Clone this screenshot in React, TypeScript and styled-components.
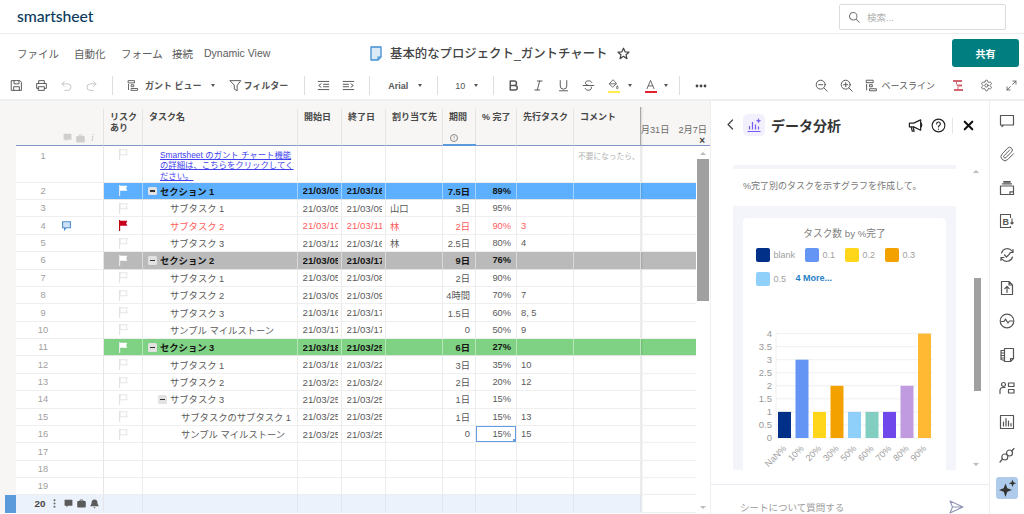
import React from "react";
import styled, { createGlobalStyle } from "styled-components";
import { Paperclip, Settings } from "lucide-react";

const JP = `"Liberation Sans", "Noto Sans CJK JP", sans-serif`;
const COLS = "16px 88px 39px 155px 44px 44px 57px 33px 41px 57px 67px 55px";
const HEAD_COLS = "16px 88px 39px 155px 44px 44px 57px 33px 41px 57px 67px 69px";

const Global = createGlobalStyle`
  html, body { margin: 0; padding: 0; background: #fff; }
  body { font-family: ${JP}; overflow: hidden; }
  * { box-sizing: border-box; }
`;

const Page = styled.div`
  width: 1024px; height: 514px; display: flex; flex-direction: column; overflow: hidden; background: #fff;
`;
const TopBar = styled.header`
  height: 34px; flex: none; display: flex; align-items: center; justify-content: space-between;
  padding: 0 18px 2px 17px; border-bottom: 1px solid #ececec;
`;
const Logo = styled.div`
  font-family: Lato, sans-serif; font-size: 15.8px; font-weight: 500; color: #0d3a5c; letter-spacing: -0.1px; margin-top: -1px;
`;
const SearchBox = styled.div`
  width: 167px; height: 26px; border: 1px solid #dcdcdc; border-radius: 2px; display: flex; align-items: center;
  padding-left: 8px; gap: 7px; font-size: 9.5px; color: #b0b0b0; margin-top: 2px;
`;
const MenuBar = styled.nav`
  height: 38px; flex: none; display: flex; align-items: center; padding: 0 5px 0 17px;
`;
const MenuItem = styled.span<{ $w: number }>`
  width: ${p => p.$w}px; font-size: 10.5px; color: #5c5c5c; white-space: nowrap; flex: none;
`;
const TitleBlock = styled.div`
  display: flex; align-items: center; margin-left: 101px; flex: none;
`;
const TitleText = styled.h1`
  margin: 0 0 0 8px; font-size: 12.4px; font-weight: 500; color: #444; white-space: nowrap;
`;
const ShareBtn = styled.button`
  margin-left: auto; width: 67px; height: 28px; background: #007e80; border: 0; border-radius: 3px; color: #fff;
  font: bold 10px ${JP};
`;
const Toolbar = styled.div`
  height: 29px; flex: none; display: flex; align-items: center; padding-left: 4px; border-bottom: 2px solid #efefef; color: #585858;
`;
const Tool = styled.span<{ $ml?: number; $w?: number }>`
  width: ${p => p.$w ?? 25}px; margin-left: ${p => p.$ml ?? 0}px; flex: none; display: flex; align-items: center; justify-content: center;
`;
const ToolSep = styled.span<{ $ml?: number }>`
  width: 1px; height: 19px; background: #dedede; margin-left: ${p => p.$ml ?? 8}px; flex: none;
`;
const ToolLabel = styled.span<{ $ml?: number; $bold?: boolean }>`
  margin-left: ${p => p.$ml ?? 0}px; font-size: 9px; font-weight: ${p => (p.$bold === false ? 400 : 700)}; color: #555; white-space: nowrap; flex: none;
`;
const Caret = styled.span<{ $ml?: number }>`
  margin-left: ${p => p.$ml ?? 0}px; flex: none; width: 0; height: 0; border-left: 2.5px solid transparent; border-right: 2.5px solid transparent;
  border-top: 3px solid #555;
`;
const ToolRight = styled.div`
  margin-left: auto; display: flex; align-items: center;
`;
const Main = styled.main`
  flex: 1; display: flex; min-height: 0;
`;
const Sheet = styled.section`
  width: 711px; flex: none; display: flex; flex-direction: column; border-right: 1px solid #eee;
`;
const HeadRow = styled.div`
  height: 45px; flex: none; display: grid; grid-template-columns: ${HEAD_COLS}; background: #f7f6f4; padding-top: 8px;
`;
const HeadCell = styled.div<{ $line?: boolean }>`
  padding: 3px 2px 0 6px; font-size: 9px; line-height: 10.5px; font-weight: 700; color: #484848; white-space: nowrap;
  border-bottom: 1.5px solid #7f98c8; border-right: 1px solid ${p => (p.$line === false ? "transparent" : "#e4e4e2")};
  display: flex; flex-direction: column; justify-content: space-between; position: relative; min-width: 0;
`;
const HeadGutter = styled.div``;
const HeadIcons = styled.div`
  height: 100%; display: flex; justify-content: flex-end; align-self: flex-end; align-items: flex-end; padding: 0 6px 2px 0; gap: 4px; margin-right: -2px;
`;
const HeadItalic = styled.span`
  font: italic 400 10px "Liberation Serif", serif; color: #c8c8c8; width: 6px; margin-left: 2px; line-height: 10px;
`;
const InfoMark = styled.span`
  width: 8px; height: 8px; border: 1px solid #888; border-radius: 50%; font-size: 6px; line-height: 6px; text-align: center; font-weight: 400; color: #666;
  margin: 0 0 3px 1px;
`;
const ActiveBar = styled.span`
  position: absolute; left: 0; right: -1px; bottom: -1.5px; height: 2.5px; background: #5b9bdc;
`;
const GanttHead = styled.div`
  border-left: 1.5px solid #a8a8a8; margin-top: -2px; margin-left: -1px; padding-top: 15px; overflow: hidden; display: flex; flex-direction: column; align-items: flex-end;
  border-bottom: 1.5px solid #7f98c8; box-shadow: inset 2px 0 2px -1px rgba(0,0,0,.12);
`;
const GanttDates = styled.div`
  display: flex; gap: 9px; justify-content: flex-end; font-size: 9.2px; color: #6a6a6a; white-space: nowrap; padding-right: 3px; width: 100%;
`;
const GanttClose = styled.span`
  font-size: 10px; font-weight: 700; color: #444; line-height: 9px; margin: 0 5px 0 0;
`;
const SheetBody = styled.div`
  flex: 1; display: flex; min-height: 0; overflow: hidden;
`;
const Rows = styled.div`
  width: 696px; flex: none; display: flex; flex-direction: column;
`;
type Kind = "plain" | "blue" | "gray" | "green" | "red" | "active";
const bgOf: Record<Kind, string> = { plain: "#fff", blue: "#5cb0ff", gray: "#bababa", green: "#7fd183", red: "#fff", active: "#ebf2fb" };
const Row = styled.div<{ $h?: number }>`
  height: ${p => p.$h ?? 17.38}px; flex: none; display: grid; grid-template-columns: ${COLS};
`;
const Gutter = styled.div<{ $active?: boolean }>`
  background: #f7f6f4; box-shadow: ${p => (p.$active ? "inset -11px 0 0 #5b9bdc" : "none")};
`;
const NumCell = styled.div<{ $active?: boolean; $top?: boolean }>`
  display: flex; align-items: ${p => (p.$top ? "flex-start" : "center")}; padding-top: ${p => (p.$top ? 5 : 0)}px;
  border-bottom: 1px solid #efefef; border-right: 1px solid #e6e6e6; background: ${p => (p.$active ? "#ebf2fb" : "#fff")};
  border-bottom-color: ${p => (p.$active ? "#ebf2fb" : "#efefef")};
`;
const RowNo = styled.span<{ $active?: boolean }>`
  width: 40px; margin-left: 7px; text-align: center; flex: none; font-size: ${p => (p.$active ? 9.8 : 9.3)}px;
  font-weight: ${p => (p.$active ? 700 : 400)}; color: ${p => (p.$active ? "#444" : "#a0a0a0")};
  transform: translateX(${p => (p.$active ? -3 : 0)}px);
`;
const RowTools = styled.span`
  display: flex; align-items: center; gap: 4px; margin-left: -1px;
`;
const Cell = styled.div<{ $kind: Kind; $right?: boolean; $bold?: boolean; $top?: boolean }>`
  position: relative; display: flex; align-items: ${p => (p.$top ? "flex-start" : "center")};
  justify-content: ${p => (p.$right ? "flex-end" : "flex-start")};
  padding: ${p => (p.$top ? "3px" : "0")} ${p => (p.$right ? 5 : 0)}px 0 4px; overflow: hidden; white-space: nowrap; min-width: 0; font-size: 9.3px;
  background: ${p => bgOf[p.$kind]};
  color: ${p => (p.$kind === "red" ? "#ff5c5c" : p.$bold ? "#151515" : "#5a5a5a")};
  font-weight: ${p => (p.$bold ? 700 : 400)};
  border-bottom: 1px solid ${p => (p.$kind === "plain" || p.$kind === "red" ? "#efefef" : p.$kind === "active" ? "#ebf2fb" : "#e4e4e4")};
  border-right: 1px solid ${p => (p.$kind === "plain" || p.$kind === "red" ? "#ececec" : p.$kind === "active" ? "#dfe6ef" : "rgba(255,255,255,.45)")};
`;
const RiskCell = styled(Cell)`
  padding-left: 15px;
`;
const TaskCell = styled(Cell)<{ $indent?: number }>`
  padding-left: ${p => p.$indent ?? 5}px;
`;
const DateText = styled.span`
  display: block; width: 35.5px; overflow: hidden; flex: none; margin-left: .5px; font-size: 9.7px;
`;
const Toggle = styled.span`
  width: 8.5px; height: 8.5px; border-radius: 1.5px; background: #e2e2e2; margin-right: 3.5px; flex: none; display: flex; align-items: center; justify-content: center;
  &::after { content: ""; width: 5px; height: 1.5px; background: #333; }
`;
const LinkText = styled.a`
  color: #3f3ff0; font-size: 8.4px; line-height: 10.4px; text-decoration: underline; white-space: normal; margin-top: 1px;
`;
const NoteText = styled.span`
  color: #b0b0b0; font-size: 7.7px; margin-top: 1px;
`;
const Selected = styled.span`
  position: absolute; inset: 0; border: 1px solid #649fe4; pointer-events: none;
  &::after { content: ""; position: absolute; right: -1px; bottom: -1px; width: 3px; height: 3px; background: #649fe4; }
`;
const GanttCell = styled.div<{ $kind: Kind }>`
  background: ${p => (p.$kind === "active" || p.$kind === "plain" || p.$kind === "red" ? "#fff" : bgOf[p.$kind])};
  border-left: 1.5px solid #a8a8a8; margin-left: -1px; box-shadow: inset 2px 0 2px -1px rgba(0,0,0,.12);
  border-bottom: 1px solid ${p => (p.$kind === "plain" || p.$kind === "red" || p.$kind === "active" ? "#efefef" : "#e4e4e4")};
`;
const ScrollCol = styled.div`
  width: 14px; flex: none; display: flex; flex-direction: column; align-items: center; padding-top: 6px; background: #fff;
`;
const ArrowUp = styled.span`
  width: 0; height: 0; border-left: 3px solid transparent; border-right: 3px solid transparent; border-bottom: 3px solid #bbb; flex: none;
`;
const ArrowDown = styled.span`
  width: 0; height: 0; border-left: 3px solid transparent; border-right: 3px solid transparent; border-top: 3px solid #bbb; margin-top: auto; margin-bottom: 5px; flex: none;
`;
const Thumb = styled.span`
  width: 12px; height: 142px; background: #a0a0a0; margin-top: 4px; flex: none;
`;
const Panel = styled.aside`
  width: 278px; flex: none; display: flex; flex-direction: column;
`;
const PanelHead = styled.div`
  height: 64px; flex: none; display: flex; align-items: center; padding: 0 15px 17px 13px;
`;
const PanelIconBox = styled.span`
  width: 22px; height: 22px; background: #f3f0fe; border-radius: 5px; margin-left: 6px; display: flex; align-items: center; justify-content: center;
`;
const PanelTitle = styled.h2`
  margin: 0 0 0 6px; font: 700 14px ${JP}; color: #343434; white-space: nowrap;
`;
const PanelActions = styled.div`
  margin-left: auto; display: flex; align-items: center; gap: 8px; margin-top: 2px;
`;
const VSep = styled.span`
  width: 1px; height: 16px; background: #e6e6e6; margin: 0 2px 0 -2px;
`;
const PanelBody = styled.div`
  position: relative; overflow: hidden; padding: 0 33px 0 22px; height: 305px; flex: none;
`;
const Strip = styled.div`
  height: 4px; background: #f3f5fa;
`;
const Prompt = styled.p`
  margin: 12px 0 0 10px; height: 25px; font-size: 9px; line-height: 10px; color: #777; white-space: nowrap;
`;
const ChartBlock = styled.div`
  background: #f3f5fb; padding: 12px 10px 0; height: 264px; overflow: hidden;
`;
const ChartCard = styled.div`
  background: #fff; border-radius: 4px; height: 300px; padding: 10px 0 0 13px;
`;
const ChartTitle = styled.div`
  text-align: center; font-size: 9.7px; color: #808080; padding-right: 13px; line-height: 12px;
`;
const Legend = styled.div`
  display: flex; flex-wrap: wrap; gap: 10px; margin-top: 8px; width: 185px;
`;
const LegendItem = styled.div`
  display: flex; align-items: center; gap: 3.5px; font-size: 9px; color: #a0a0a0; height: 14px;
`;
const Swatch = styled.span<{ $c: string }>`
  width: 14px; height: 14px; border-radius: 2px; background: ${p => p.$c}; flex: none;
`;
const More = styled.span`
  color: #1f7ec9; font-weight: 700; font-size: 9px; margin-left: 6px; height: 14px; line-height: 13px;
`;
const PlotWrap = styled.div`
  margin: 34px 0 0 -13px; height: 150px;
`;
const PanelArrow = styled.span<{ $down?: boolean }>`
  position: absolute; right: 10px; ${p => (p.$down ? "bottom: 4px; border-top: 3px solid #bbb;" : "top: 5px; border-bottom: 3px solid #bbb;")}
  width: 0; height: 0; border-left: 3px solid transparent; border-right: 3px solid transparent;
`;
const PanelThumb = styled.span`
  position: absolute; top: 113px; right: 8px; width: 7px; height: 113px; background: #a0a0a0;
`;
const PanelFoot = styled.div`
  height: 30px; flex: none; border-top: 1px solid #e9ecf3; display: flex; align-items: center; justify-content: space-between; padding: 14px 25px 0 29px;
  font-size: 9.5px; color: #9a9a9a; margin-top: auto;
`;
const Rail = styled.nav`
  width: 35px; flex: none; border-left: 1px solid #eee; display: flex; flex-direction: column; align-items: center; padding-top: 9px; gap: 11.4px; color: #555;
`;
const RailItem = styled.span<{ $active?: boolean }>`
  width: 22px; height: 22px; display: flex; align-items: center; justify-content: center; border-radius: 3px;
  background: ${p => (p.$active ? "#aecbeb" : "transparent")};
`;
const ColorBar = styled.span<{ $c: string }>`
  display: block; width: 12px; height: 2px; background: ${p => p.$c}; margin-top: 1px;
`;
const Stack = styled.span`
  display: flex; flex-direction: column; align-items: center;
`;

type SvgP = { size?: number; children: React.ReactNode; sw?: number; color?: string; vb?: number };
const Ico = ({ size = 13, children, sw = 1.2, color = "currentColor", vb = 16 }: SvgP) => (
  <svg width={size} height={size} viewBox={`0 0 ${vb} ${vb}`} fill="none" stroke={color} strokeWidth={sw} strokeLinecap="round" strokeLinejoin="round">
    {children}
  </svg>
);

const Flag = ({ kind }: { kind: "line" | "white" | "red" }) => (
  <svg width="9" height="11" viewBox="0 0 9 11" style={{ display: "block" }}>
    <path d="M.6 0v11" stroke={kind === "red" ? "#b00" : kind === "white" ? "#eee" : "#e2e2e2"} strokeWidth="1.1" fill="none" />
    <path d="M1 .8h7.3L7.2 3.2 8.3 5.8H1z" fill={kind === "red" ? "#c8001e" : kind === "white" ? "#fff" : "none"} stroke={kind === "line" ? "#e2e2e2" : "none"} strokeWidth=".9" />
  </svg>
);
const Bubble = ({ color = "#5a5a5a", outline }: { color?: string; outline?: boolean }) => (
  <svg width="9" height="10" viewBox="0 0 9 10" style={{ display: "block" }}>
    <path d="M.6.8h7.8v6H4L2.6 8.6V6.800H.6z" fill={outline ? "#cfe2f7" : color} stroke={outline ? color : "none"} strokeWidth="1.1" />
  </svg>
);
const Case = ({ color = "#5a5a5a" }: { color?: string }) => (
  <svg width="9" height="9" viewBox="0 0 9 9" style={{ display: "block" }}>
    <path d="M3 2V1h3v1" stroke={color} fill="none" strokeWidth=".9" />
    <rect x=".2" y="2" width="8.600" height="6.500" rx="1" fill={color} />
  </svg>
);
const Bell = () => (
  <svg width="9" height="10" viewBox="0 0 9 10" style={{ display: "block" }}>
    <path d="M4.500 .6c-2 0-3 1.400-3 3.400 0 1.500-1 2.400-1.300 3.200h8.600C8.500 6.400 7.500 5.500 7.500 4c0-2-1-3.400-3-3.400zM3.300 8.200h2.400L4.500 9.500z" fill="#5a5a5a" />
  </svg>
);

type Rec = { n: number; kind: Kind; task?: string; level?: number; toggle?: boolean; s?: string; e?: string; who?: string; d?: string; p?: string; pre?: string; flag?: boolean; bubble?: boolean; sel?: boolean };
const rows: Rec[] = [
  { n: 2, kind: "blue", task: "セクション 1", level: 0, toggle: true, s: "21/03/05", e: "21/03/16", d: "7.5日", p: "89%", flag: true },
  { n: 3, kind: "plain", task: "サブタスク 1", level: 1, s: "21/03/05", e: "21/03/09", who: "山口", d: "3日", p: "95%", flag: true },
  { n: 4, kind: "red", task: "サブタスク 2", level: 1, s: "21/03/10", e: "21/03/11", who: "林", d: "2日", p: "90%", pre: "3", flag: true, bubble: true },
  { n: 5, kind: "plain", task: "サブタスク 3", level: 1, s: "21/03/12", e: "21/03/16", who: "林", d: "2.5日", p: "80%", pre: "4", flag: true },
  { n: 6, kind: "gray", task: "セクション 2", level: 0, toggle: true, s: "21/03/05", e: "21/03/17", d: "9日", p: "76%", flag: true },
  { n: 7, kind: "plain", task: "サブタスク 1", level: 1, s: "21/03/05", e: "21/03/08", d: "2日", p: "90%", flag: true },
  { n: 8, kind: "plain", task: "サブタスク 2", level: 1, s: "21/03/09", e: "21/03/09", d: "4時間", p: "70%", pre: "7", flag: true },
  { n: 9, kind: "plain", task: "サブタスク 3", level: 1, s: "21/03/16", e: "21/03/17", d: "1.5日", p: "60%", pre: "8, 5", flag: true },
  { n: 10, kind: "plain", task: "サンプル マイルストーン", level: 1, s: "21/03/17", e: "21/03/17", d: "0", p: "50%", pre: "9", flag: true },
  { n: 11, kind: "green", task: "セクション 3", level: 0, toggle: true, s: "21/03/18", e: "21/03/25", d: "6日", p: "27%", flag: true },
  { n: 12, kind: "plain", task: "サブタスク 1", level: 1, s: "21/03/18", e: "21/03/22", d: "3日", p: "35%", pre: "10", flag: true },
  { n: 13, kind: "plain", task: "サブタスク 2", level: 1, s: "21/03/23", e: "21/03/24", d: "2日", p: "20%", pre: "12", flag: true },
  { n: 14, kind: "plain", task: "サブタスク 3", level: 1, toggle: true, s: "21/03/25", e: "21/03/25", d: "1日", p: "15%", flag: true },
  { n: 15, kind: "plain", task: "サブタスクのサブタスク 1", level: 2, s: "21/03/25", e: "21/03/25", d: "1日", p: "15%", pre: "13", flag: true },
  { n: 16, kind: "plain", task: "サンプル マイルストーン", level: 2, s: "21/03/25", e: "21/03/25", d: "0", p: "15%", pre: "15", flag: true, sel: true },
  { n: 17, kind: "plain" },
  { n: 18, kind: "plain" },
  { n: 19, kind: "plain" },
];

const bars = [
  { l: "NaN%", v: 1, c: "#003087" }, { l: "10%", v: 3, c: "#6495f5" }, { l: "20%", v: 1, c: "#ffd61a" },
  { l: "30%", v: 2, c: "#f2a100" }, { l: "50%", v: 1, c: "#8fd0fb" }, { l: "60%", v: 1, c: "#82cec1" },
  { l: "70%", v: 1, c: "#7047eb" }, { l: "80%", v: 2, c: "#c09bdf" }, { l: "90%", v: 4, c: "#ffb933" },
];

const Plot = () => {
  const y0 = 118, unit = 26.1, ox = 33;
  return (
    <svg width="203" height="150" viewBox="0 0 203 150" style={{ display: "block" }}>
      {[0, 0.5, 1, 1.5, 2, 2.5, 3, 3.5, 4].map(t => (
        <g key={t}>
          <line x1={ox} x2={190} y1={y0 - t * unit} y2={y0 - t * unit} stroke="#f0f0f0" strokeWidth="1" />
          <text x={29} y={y0 - t * unit + 3.200} textAnchor="end" fontSize="9.500" fill="#999" fontFamily="Liberation Sans">{t}</text>
        </g>
      ))}
      <line x1={ox} x2={ox} y1={y0 - 4 * unit} y2={y0} stroke="#f0f0f0" />
      {bars.map((b, i) => (
        <g key={b.l}>
          <rect x={35 + i * 17.5} y={y0 - b.v * unit} width="13" height={b.v * unit} fill={b.c} />
          <text transform={`translate(${44 + i * 17.5} ${y0 + 11}) rotate(-45)`} textAnchor="end" fontSize="9" fill="#a0a0a0" fontFamily="Liberation Sans">{b.l}</text>
        </g>
      ))}
    </svg>
  );
};

const railIcons: React.ReactNode[] = [
  <Ico size={16}><path d="M1.500 2.500h13v9.500H4.300L3 13.500V12H1.500z" /></Ico>,
  <Paperclip size={16} strokeWidth={1.4} />,
  <Ico size={16}><path d="M1.500 6h13v8.500h-13zM3.500 3.800h9M11 14.500v-2.700h3.500" /><path d="M5 1.800h6" strokeWidth={1.800} /></Ico>,
  <svg width="16" height="16" viewBox="0 0 16 16" fill="none" stroke="currentColor" strokeWidth="1.100" strokeLinejoin="round">
    <path d="M11.500 5V1.500h-10v13h10V13" />
    <text x="3.600" y="11.500" fontSize="9" fontWeight="700" fill="currentColor" stroke="none" fontFamily="Liberation Sans">B</text>
    <path d="M13 5.500V11M11.500 9.500 13 11l1.500-1.500" />
  </svg>,
  <Ico size={16}><path d="M2.500 6A6 6 0 0 1 13 4l1 1.500M13.500 10A6 6 0 0 1 3 12l-1-1.500M14 2.500v3h-3M2 13.500v-3h3M5.500 8l2 2 3.500-3.500" /></Ico>,
  <Ico size={16}><path d="M2.500 1.500h7.500l3.500 3.500v9.500h-11zM10 1.500V5h3.500M8 12.500v-6M5.800 8.700 8 6.500l2.200 2.200" /></Ico>,
  <Ico size={16}><circle cx="8" cy="8" r="6.800" /><path d="M2.500 8.500h2.500l1.500-2.500 2.500 4 1.500-2h3" /></Ico>,
  <Ico size={16}><path d="M5.500 1.500h9v10l-3 3h-6zM14.500 11.500h-3v3M5.500 3.500h-3.500v9l3.500 1M2 6h3.500M2 8.500h3.500M2 11h3.500" /></Ico>,
  <Ico size={16}><circle cx="4.500" cy="4.500" r="2" /><path d="M1 13.500V10a3 3 0 0 1 3-2.500h2M9.500 3h5.500v3.500H9.500zM9.500 9.500h5.500V13H9.500z" /></Ico>,
  <Ico size={16}><path d="M1.500 1.500h13v13h-13zM4.500 12V8M7 12V4.500M9.500 12V7M12 12V9.500" /></Ico>,
  <Ico size={16}><circle cx="5.800" cy="10" r="3" /><circle cx="10.500" cy="6" r="3" /><path d="M1 15l2.500-3M12.800 4l2.200-2.500" /></Ico>,
  <svg width="19" height="19" viewBox="0 0 19 19"><path d="M7.500 4.500 9.300 9.200 14 11 9.300 12.800 7.500 18 5.700 12.800 1 11 5.700 9.200zM14.500.5l1 2.700 2.700 1-2.700 1-1 2.700-1-2.700-2.700-1 2.700-1z" fill="#333" /></svg>,
];

const GanttIcon = () => (
  <Ico><path d="M2 1.500h8v3H2zM2 6.500v7M6 7h3v2.500H6zM6 12h8v2.500H6z" /></Ico>
);

export default function App() {
  return (
    <Page>
      <Global />
      <TopBar>
        <Logo>smartsheet</Logo>
        <SearchBox>
          <Ico size={12} color="#777" sw={1.400}><circle cx="7" cy="7" r="5" /><path d="m11 11 4 4" /></Ico>
          検索...
        </SearchBox>
      </TopBar>
      <MenuBar>
        <MenuItem $w={57}>ファイル</MenuItem>
        <MenuItem $w={47}>自動化</MenuItem>
        <MenuItem $w={51}>フォーム</MenuItem>
        <MenuItem $w={32}>接続</MenuItem>
        <MenuItem $w={65}>Dynamic View</MenuItem>
        <TitleBlock>
          <svg width="12" height="15" viewBox="0 0 12 15"><path d="M1 1h10v10l-3 3H1z" fill="#dbeaf8" stroke="#3f8fd2" strokeWidth="1.300" strokeLinejoin="round" /><path d="M8 14v-3h3" fill="none" stroke="#3f8fd2" strokeWidth="1.100" /></svg>
          <TitleText>基本的なプロジェクト_ガントチャート</TitleText>
          <Tool $w={14} $ml={9}>
            <svg width="13" height="13" viewBox="0 0 16 16" fill="none" stroke="#444" strokeWidth="1.500" strokeLinejoin="round"><path d="m8 1.500 2 4.400 4.700.5-3.500 3.200 1 4.700L8 11.500l-4.200 2.800 1-4.700L1.300 6.400 6 5.900z" /></svg>
          </Tool>
        </TitleBlock>
        <ShareBtn>共有</ShareBtn>
      </MenuBar>
      <Toolbar>
        <Tool><Ico><path d="M2 2h10l2 2v10H2zM5 2v4h6V2M4.500 14V9.500h7V14" /></Ico></Tool>
        <Tool><Ico><path d="M4.500 5V2h7v3M4.500 11.500H2V5.500h12v6h-2.500M4.500 9.500h7V14h-7z" /></Ico></Tool>
        <Tool><Ico color="#c4c4c4"><path d="M2.500 6h7a4 4 0 0 1 0 8H6M5.500 3l-3 3 3 3" /></Ico></Tool>
        <Tool><Ico color="#c4c4c4"><path d="M13.500 6h-7a4 4 0 0 0 0 8H10M10.500 3l3 3-3 3" /></Ico></Tool>
        <ToolSep />
        <Tool $w={12} $ml={14}><GanttIcon /></Tool>
        <ToolLabel $ml={6}>ガント ビュー</ToolLabel>
        <Caret $ml={9} />
        <Tool $w={13} $ml={14}><Ico><path d="M1.500 2h13L10 8v6.500L6.500 12.500V8z" /></Ico></Tool>
        <ToolLabel $ml={2}>フィルター</ToolLabel>
        <ToolSep $ml={16} />
        <Tool $ml={6}><Ico><path d="M1.500 3h13M8 6.500h6.500M8 9.500h6.500M1.500 13h13M5 6 2 8l3 2" /></Ico></Tool>
        <Tool><Ico><path d="M1.500 3h13M1.500 6.500H8M1.500 9.500H8M1.500 13h13M11 6l3 2-3 2" /></Ico></Tool>
        <ToolSep />
        <ToolLabel $ml={18}>Arial</ToolLabel>
        <Caret $ml={10} />
        <ToolSep $ml={15} />
        <ToolLabel $ml={17} $bold={false}>10</ToolLabel>
        <Caret $ml={9} />
        <ToolSep $ml={15} />
        <Tool $ml={7}><Ico sw={1.800}><path d="M4 2.500h5a2.700 2.700 0 0 1 0 5.400H4zM4 7.900h5.800a2.800 2.800 0 0 1 0 5.600H4z" /></Ico></Tool>
        <Tool><Ico><path d="M6.500 2.500h6M3.500 13.500h6M9.500 2.500l-3 11" /></Ico></Tool>
        <Tool><Ico><path d="M4 2v6.500a4 4 0 0 0 8 0V2M3 14.500h10" /></Ico></Tool>
        <Tool><Ico><path d="M12 4.200C11.500 3 10 2.300 8 2.300c-2.300 0-3.800 1-3.800 2.700 0 1.400 1 2.200 3.800 2.900M1.500 8h13M11.500 10c.8 2.400-1 3.800-3.500 3.800-2 0-3.500-.7-4-2" /></Ico></Tool>
        <Tool><Stack><Ico size={11}><path d="M7 1.500 1.800 7 6.500 12 12 7zM2.500 7h9M13.500 10.500c.8 1.100 1.200 1.800 1.200 2.400a1.200 1.200 0 0 1-2.400 0c0-.6.400-1.300 1.200-2.400z" /></Ico><ColorBar $c="#ffec4d" /></Stack></Tool>
        <Caret $ml={2} />
        <Tool $ml={6}><Stack><Ico size={11} sw={1.300}><path d="M3 14 8 2l5 12M4.800 10h6.400" /></Ico><ColorBar $c="#e0232e" /></Stack></Tool>
        <Caret $ml={1} />
        <ToolSep $ml={11} />
        <Tool $ml={8}>
          <svg width="12" height="4" viewBox="0 0 12 4"><circle cx="2" cy="2" r="1.400" fill="#444" /><circle cx="6" cy="2" r="1.400" fill="#444" /><circle cx="10" cy="2" r="1.400" fill="#444" /></svg>
        </Tool>
        <ToolRight>
          <Tool><Ico><circle cx="7" cy="7" r="5.500" /><path d="m11 11 4 4M4.500 7h5" /></Ico></Tool>
          <Tool><Ico><circle cx="7" cy="7" r="5.500" /><path d="m11 11 4 4M4.500 7h5M7 4.500v5" /></Ico></Tool>
          <Tool $w={13} $ml={6}><GanttIcon /></Tool>
          <ToolLabel $ml={3} $bold={false}>ベースライン</ToolLabel>
          <Tool $ml={10}>
            <svg width="12" height="13" viewBox="0 0 12 13" fill="none" stroke="#d0656f" strokeWidth="2.200"><path d="M1 2h9M5 6.500h5M2 11h9" /><path d="M4.500 3v2.500M6 8v2" strokeWidth="1" /></svg>
          </Tool>
          <Tool $ml={4}><Settings size={13} strokeWidth={1.6} /></Tool>
          <Tool><Ico size={11}><path d="M10 1.500h4.500V6M14.500 1.500 9.500 6.500M6 14.500H1.500V10M1.500 14.500l5-5" /></Ico></Tool>
        </ToolRight>
      </Toolbar>
      <Main>
        <Sheet>
          <HeadRow>
            <HeadGutter />
            <HeadCell>
              <HeadIcons>
                <Bubble color="#cfcfcf" />
                <Case color="#cfcfcf" />
                <HeadItalic>i</HeadItalic>
              </HeadIcons>
            </HeadCell>
            <HeadCell>リスク<br />あり</HeadCell>
            <HeadCell>タスク名</HeadCell>
            <HeadCell>開始日</HeadCell>
            <HeadCell>終了日</HeadCell>
            <HeadCell>割り当て先</HeadCell>
            <HeadCell>
              期間
              <InfoMark>!</InfoMark>
              <ActiveBar />
            </HeadCell>
            <HeadCell>% 完了</HeadCell>
            <HeadCell>先行タスク</HeadCell>
            <HeadCell $line={false}>コメント</HeadCell>
            <GanttHead>
              <GanttDates><span>1月31日</span><span>2月7日</span></GanttDates>
              <GanttClose>×</GanttClose>
            </GanttHead>
          </HeadRow>
          <SheetBody>
            <Rows>
              <Row $h={36.7}>
                <Gutter />
                <NumCell $top><RowNo>1</RowNo></NumCell>
                <RiskCell $kind="plain" $top><Flag kind="line" /></RiskCell>
                <TaskCell $kind="plain" $indent={17} $top>
                  <LinkText>Smartsheet のガント チャート機能の詳細は、こちらをクリックしてください。</LinkText>
                </TaskCell>
                <Cell $kind="plain" /><Cell $kind="plain" /><Cell $kind="plain" /><Cell $kind="plain" /><Cell $kind="plain" /><Cell $kind="plain" />
                <Cell $kind="plain" $top><NoteText>不要になったら、</NoteText></Cell>
                <GanttCell $kind="plain" />
              </Row>
              {rows.map(r => {
                const section = r.kind === "blue" || r.kind === "gray" || r.kind === "green";
                const indent = r.level === 0 ? 17 : r.level === 1 ? 27 : r.level === 2 ? 38 : 4;
                return (
                  <Row key={r.n}>
                    <Gutter />
                    <NumCell>
                      <RowNo>{r.n}</RowNo>
                      {r.bubble && <RowTools><Bubble color="#4d8ed0" outline /></RowTools>}
                    </NumCell>
                    <RiskCell $kind={r.kind}>
                      {r.flag && <Flag kind={section ? "white" : r.kind === "red" ? "red" : "line"} />}
                    </RiskCell>
                    <TaskCell $kind={r.kind} $bold={section} $indent={r.toggle ? indent - 12 : indent}>
                      {r.toggle && <Toggle />}
                      {r.task}
                    </TaskCell>
                    <Cell $kind={r.kind} $bold={section}><DateText>{r.s}</DateText></Cell>
                    <Cell $kind={r.kind} $bold={section}><DateText>{r.e}</DateText></Cell>
                    <Cell $kind={r.kind}>{r.who}</Cell>
                    <Cell $kind={r.kind} $bold={section} $right>{r.d}</Cell>
                    <Cell $kind={r.kind} $bold={section} $right>{r.p}{r.sel && <Selected />}</Cell>
                    <Cell $kind={r.kind}>{r.pre}</Cell>
                    <Cell $kind={r.kind} />
                    <GanttCell $kind={r.kind} />
                  </Row>
                );
              })}
              <Row>
                <Gutter $active />
                <NumCell $active>
                  <RowNo $active>20</RowNo>
                  <RowTools>
                    <svg width="3" height="9" viewBox="0 0 3 9" style={{ marginLeft: -9, marginRight: 4 }}><circle cx="1.500" cy="1.200" r="1" fill="#666" /><circle cx="1.500" cy="4.500" r="1" fill="#666" /><circle cx="1.500" cy="7.800" r="1" fill="#666" /></svg>
                    <Bubble /><Case /><Bell />
                  </RowTools>
                </NumCell>
                {Array.from({ length: 9 }, (_, i) => <Cell key={i} $kind="active" />)}
                <GanttCell $kind="active" />
              </Row>
            </Rows>
            <ScrollCol>
              <ArrowUp />
              <Thumb />
              <ArrowDown />
            </ScrollCol>
          </SheetBody>
        </Sheet>
        <Panel>
          <PanelHead>
            <Ico size={13} color="#444" sw={1.600}><path d="m10.500 2.500-5.500 5.500 5.500 5.500" /></Ico>
            <PanelIconBox>
              <svg width="16" height="16" viewBox="0 0 16 16" fill="none" stroke="#7b5cf0" strokeWidth="1.200"><path d="M1.500 14.500h13M3.500 12.500V9M6.500 12.500V5M9.500 12.500V7.500M12.500 12.500V9.500" /><path d="M12.500 1l.8 2 2 .8-2 .8-.8 2-.8-2-2-.8 2-.8z" fill="#7b5cf0" stroke="none" /></svg>
            </PanelIconBox>
            <PanelTitle>データ分析</PanelTitle>
            <PanelActions>
              <Ico size={15} color="#222" sw={1.300}><path d="M1.500 5.500h4.500L13.500 2v11L6 9.500H1.500zM3.500 9.500l1 4.500h2l-1-4.500M13.500 5c1.500.5 1.500 4.500 0 5" /></Ico>
              <Ico size={15} color="#222" sw={1.200}><circle cx="8" cy="8" r="6.800" /><path d="M6 6.300a2 2 0 1 1 3 1.700c-.7.400-1 .8-1 1.500M8 11.800v.1" /></Ico>
              <VSep />
              <Ico size={11} color="#111" sw={3}><path d="m2.500 2.500 11 11M13.500 2.500l-11 11" /></Ico>
            </PanelActions>
          </PanelHead>
          <PanelBody>
            <Strip />
            <Prompt>%完了別のタスクを示すグラフを作成して。</Prompt>
            <ChartBlock>
              <ChartCard>
                <ChartTitle>タスク数 by %完了</ChartTitle>
                <Legend>
                  <LegendItem><Swatch $c="#003087" />blank</LegendItem>
                  <LegendItem><Swatch $c="#6495f5" />0.1</LegendItem>
                  <LegendItem><Swatch $c="#ffd61a" />0.2</LegendItem>
                  <LegendItem><Swatch $c="#f2a100" />0.3</LegendItem>
                  <LegendItem><Swatch $c="#8fd0fb" />0.5<More>4 More...</More></LegendItem>
                </Legend>
                <PlotWrap><Plot /></PlotWrap>
              </ChartCard>
            </ChartBlock>
            <PanelArrow />
            <PanelThumb />
            <PanelArrow $down />
          </PanelBody>
          <PanelFoot>
            シートについて質問する
            <svg width="15" height="14" viewBox="0 0 15 14" fill="none" stroke="#8f93b5" strokeWidth="1.100" strokeLinejoin="round"><path d="M1 1l13 6-13 6 2.500-6zM3.500 7H14" /></svg>
          </PanelFoot>
        </Panel>
        <Rail>
          {railIcons.map((ic, i) => <RailItem key={i} $active={i === 11}>{ic}</RailItem>)}
        </Rail>
      </Main>
    </Page>
  );
}
